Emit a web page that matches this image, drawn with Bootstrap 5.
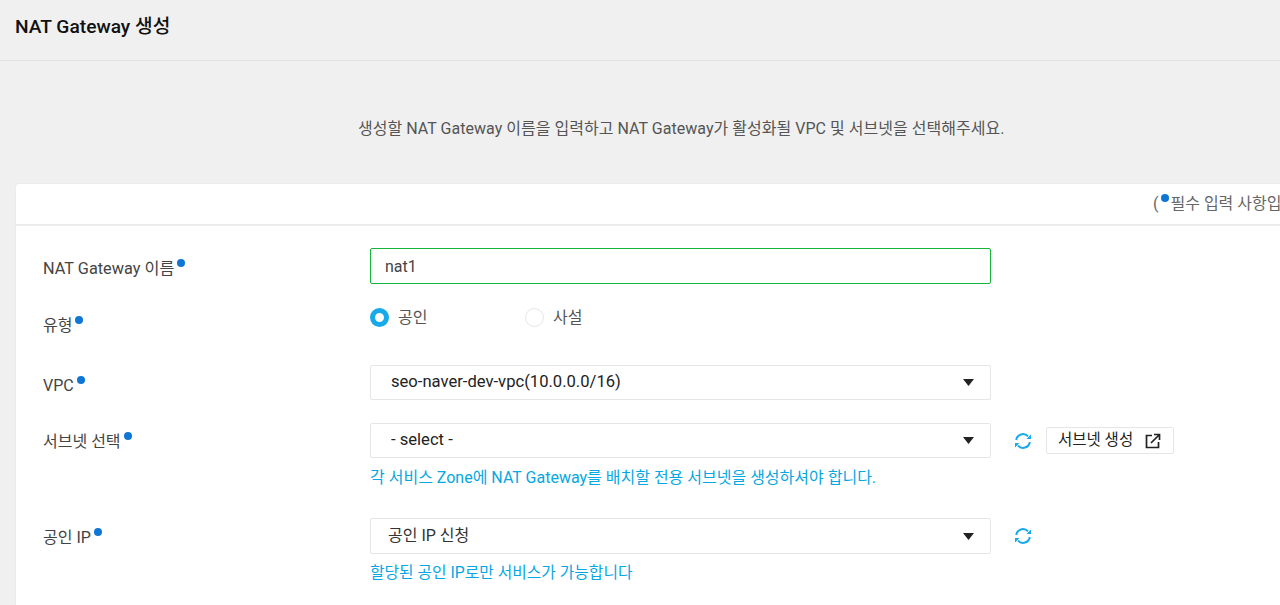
<!DOCTYPE html>
<html lang="ko">
<head>
    <meta charset="UTF-8">
    <meta name="viewport" content="width=device-width, initial-scale=1.0">
    <title>NAT Gateway 생성</title>
    <link href="https://cdn.jsdelivr.net/npm/bootstrap@5.3.3/dist/css/bootstrap.min.css" rel="stylesheet">
    <style>
        html, body { height: 605px; overflow: hidden; }
        body { background: #f0f0f0; font-family: Roboto, "Noto Sans CJK KR", sans-serif; font-size: 16px; color: #333; }
        .page-head { height: 61px; padding: 14px 15px 0; border-bottom: 1px solid #e2e2e2; }
        .page-head h1 { font-size: 19.2px; font-weight: 500; line-height: 26px; margin: 0; color: #111; }
        .page-desc { height: 122px; padding-top: 56px; padding-left: 358px; line-height: 24px; color: #555; letter-spacing: .03px; }
        .form-panel { margin-left: 15px; width: 1290px; height: 440px; background: #fff; border-radius: 4px 0 0 0; border: 1px solid #ebebeb; border-right: 0; }
        .req-note { height: 42px; border-bottom: 2px solid #ebebeb; padding: 8px 0 0 1137px; line-height: 24px; color: #666; white-space: nowrap; }
        .req-dot { display: inline-block; width: 8px; height: 8px; border-radius: 50%; background: #0f76d6; vertical-align: 7px; margin-left: -1px; }
        .req-note .req-dot { margin: 0 1px 0 3px; }
        .form-line { display: flex; padding-left: 27px; }
        .form-label-col { width: 327px; flex: none; color: #444; line-height: 24px; }
        .form-field { width: 621px; flex: none; }
        .name-label { font-size: 16.3px; }
        .name-input.form-control { height: 36px; border: 1px solid #16b43c; border-radius: 2px; padding: 0 14px; font-size: 16px; color: #444; box-shadow: none; }
        .pick-select.form-select { height: 35px; border: 1px solid #e6e6e6; border-radius: 2px; padding: 0 40px 0 20px; font-size: 16.6px; color: #222; box-shadow: none;
            background-image: url("data:image/svg+xml,%3Csvg xmlns='http://www.w3.org/2000/svg' width='11' height='7'%3E%3Cpath d='M0 0h11L5.500 7z' fill='%23222'/%3E%3C/svg%3E");
            background-size: 11px 7px; background-position: right 16px center; }
        .ip-select.form-select { height: 36px; padding-left: 17px; font-size: 16px; color: #333; }
        .radio-item { display: flex; align-items: center; gap: 9px; color: #555; line-height: 24px; }
        .radio-item.first { width: 155px; }
        .radio-item span:last-child { margin-top: 2px; }
        .radio-mark { width: 19px; height: 19px; border-radius: 50%; border: 1px solid #e6e6e6; background: #fff; }
        .radio-mark.on { border: 5.5px solid #17a9ea; }
        .help-line { color: #06a7e2; line-height: 24px; }
        .help-short { font-size: 15.8px; }
        .refresh-ico { width: 18px; height: 18px; color: #17a9ea; margin-left: 23px; flex: none; }
        .create-btn { height: 27px; width: 128px; margin-left: 14px; background: #fff; border: 1px solid #e6e6e6; border-radius: 2px; color: #222; font-size: 15.5px; padding: 0 0 0 11px; display: flex; align-items: center; gap: 12px; white-space: nowrap; }
        .mt-name { margin-top: 22px; }
        .mt-name .form-label-col { padding-top: 9px; }
        .mt-type { margin-top: 21px; }
        .mt-type .form-label-col { padding-top: 9px; }
        .mt-type .form-field { height: 24px; }
        .mt-vpc { margin-top: 27px; }
        .mt-vpc .form-label-col { padding-top: 9px; }
        .mt-subnet { margin-top: 23px; }
        .mt-subnet .form-label-col { padding-top: 7px; }
        .mt-help { margin-top: 8px; }
        .side-tools { height: 35px; }
        .mt-ip { margin-top: 28px; }
        .mt-ip .form-label-col { padding-top: 8px; }
        .mt-help2 { margin-top: 7px; }
        .side-tools2 { height: 36px; }
    </style>
</head>
<body>
    <div class="page-head"><h1>NAT Gateway 생성</h1></div>
    <div class="page-desc">생성할 NAT Gateway 이름을 입력하고 NAT Gateway가 활성화될 VPC 및 서브넷을 선택해주세요.</div>

    <div class="form-panel">
        <div class="req-note">(<span class="req-dot"></span>필수 입력 사항입</div>

        <div class="form-line mt-name">
            <div class="form-label-col"><span class="name-label">NAT Gateway 이름</span> <span class="req-dot"></span></div>
            <div class="form-field"><input type="text" class="form-control name-input" value="nat1"></div>
        </div>

        <div class="form-line mt-type">
            <div class="form-label-col">유형 <span class="req-dot"></span></div>
            <div class="form-field d-flex">
                <div class="radio-item first"><span class="radio-mark on"></span><span>공인</span></div>
                <div class="radio-item"><span class="radio-mark"></span><span>사설</span></div>
            </div>
        </div>

        <div class="form-line mt-vpc">
            <div class="form-label-col">VPC <span class="req-dot"></span></div>
            <div class="form-field">
                <select class="form-select pick-select"><option>seo-naver-dev-vpc(10.0.0.0/16)</option></select>
            </div>
        </div>

        <div class="form-line mt-subnet align-items-start">
            <div class="form-label-col">서브넷 선택 <span class="req-dot"></span></div>
            <div class="form-field">
                <select class="form-select pick-select"><option>- select -</option></select>
                <div class="help-line mt-help">각 서비스 Zone에 NAT Gateway를 배치할 전용 서브넷을 생성하셔야 합니다.</div>
            </div>
            <div class="d-flex align-items-center side-tools">
                <svg class="refresh-ico" viewBox="0 0 18 18" fill="none" stroke="currentColor" stroke-width="2"><path d="M2.200 8a6.800 6.800 0 0 1 11.800-3.600"/><path d="M15.800 10a6.800 6.800 0 0 1-11.800 3.600"/><path d="M17 2.500v4.500h-4.500z" fill="currentColor" stroke="none"/><path d="M1 15.500v-4.500h4.500z" fill="currentColor" stroke="none"/></svg>
                <button type="button" class="create-btn">서브넷 생성
                    <svg width="16" height="16" viewBox="0 0 16 16" fill="none" stroke="#222" stroke-width="1.7"><path d="M7 2.500H1.500v12h12V9"/><path d="M6 10 14.500 1.500M9 1.500h5.500V7"/></svg>
                </button>
            </div>
        </div>

        <div class="form-line mt-ip align-items-start">
            <div class="form-label-col">공인 IP <span class="req-dot"></span></div>
            <div class="form-field">
                <select class="form-select pick-select ip-select"><option>공인 IP 신청</option></select>
                <div class="help-line help-short mt-help2">할당된 공인 IP로만 서비스가 가능합니다</div>
            </div>
            <div class="d-flex align-items-center side-tools2">
                <svg class="refresh-ico" viewBox="0 0 18 18" fill="none" stroke="currentColor" stroke-width="2"><path d="M2.200 8a6.800 6.800 0 0 1 11.800-3.600"/><path d="M15.800 10a6.800 6.800 0 0 1-11.800 3.600"/><path d="M17 2.500v4.500h-4.500z" fill="currentColor" stroke="none"/><path d="M1 15.500v-4.500h4.500z" fill="currentColor" stroke="none"/></svg>
            </div>
        </div>
    </div>
</body>
</html>
